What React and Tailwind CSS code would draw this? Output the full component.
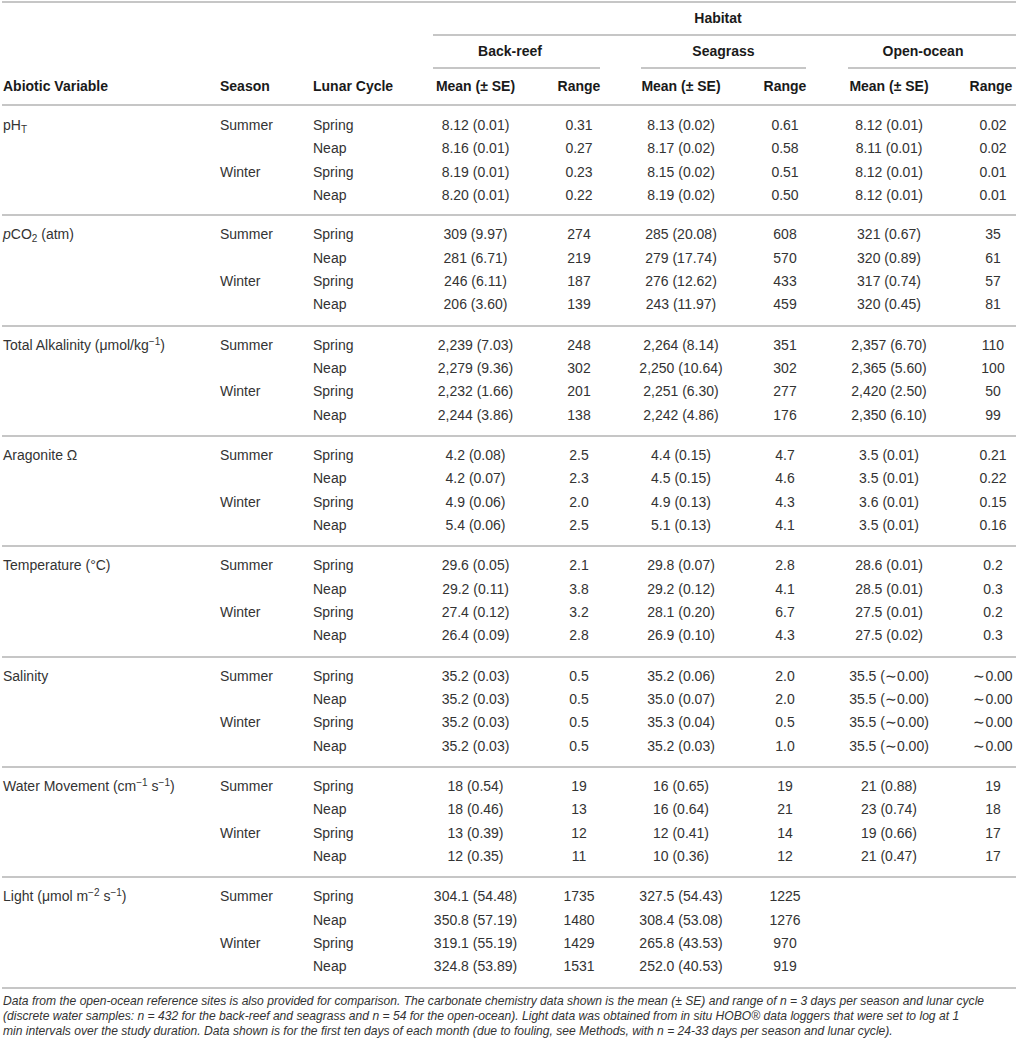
import React from 'react'

const COLS = 'grid grid-cols-[214px_93px_104px_125px_82px_122px_86px_122px_66px]'

const Sub = ({ children }) => <sub className="text-[10px] align-baseline bottom-[-3px]">{children}</sub>
const Sup = ({ children }) => <sup className="text-[10px] align-baseline top-[-5px]">{children}</sup>

const GROUPS = [
  {
    label: <>pH<Sub>T</Sub></>,
    rows: [
      ['Summer', 'Spring', '8.12 (0.01)', '0.31', '8.13 (0.02)', '0.61', '8.12 (0.01)', '0.02'],
      ['', 'Neap', '8.16 (0.01)', '0.27', '8.17 (0.02)', '0.58', '8.11 (0.01)', '0.02'],
      ['Winter', 'Spring', '8.19 (0.01)', '0.23', '8.15 (0.02)', '0.51', '8.12 (0.01)', '0.01'],
      ['', 'Neap', '8.20 (0.01)', '0.22', '8.19 (0.02)', '0.50', '8.12 (0.01)', '0.01'],
    ],
  },
  {
    label: <><i>p</i>CO<Sub>2</Sub> (atm)</>,
    rows: [
      ['Summer', 'Spring', '309 (9.97)', '274', '285 (20.08)', '608', '321 (0.67)', '35'],
      ['', 'Neap', '281 (6.71)', '219', '279 (17.74)', '570', '320 (0.89)', '61'],
      ['Winter', 'Spring', '246 (6.11)', '187', '276 (12.62)', '433', '317 (0.74)', '57'],
      ['', 'Neap', '206 (3.60)', '139', '243 (11.97)', '459', '320 (0.45)', '81'],
    ],
  },
  {
    label: <>Total Alkalinity (μmol/kg<Sup>−1</Sup>)</>,
    rows: [
      ['Summer', 'Spring', '2,239 (7.03)', '248', '2,264 (8.14)', '351', '2,357 (6.70)', '110'],
      ['', 'Neap', '2,279 (9.36)', '302', '2,250 (10.64)', '302', '2,365 (5.60)', '100'],
      ['Winter', 'Spring', '2,232 (1.66)', '201', '2,251 (6.30)', '277', '2,420 (2.50)', '50'],
      ['', 'Neap', '2,244 (3.86)', '138', '2,242 (4.86)', '176', '2,350 (6.10)', '99'],
    ],
  },
  {
    label: <>Aragonite Ω</>,
    rows: [
      ['Summer', 'Spring', '4.2 (0.08)', '2.5', '4.4 (0.15)', '4.7', '3.5 (0.01)', '0.21'],
      ['', 'Neap', '4.2 (0.07)', '2.3', '4.5 (0.15)', '4.6', '3.5 (0.01)', '0.22'],
      ['Winter', 'Spring', '4.9 (0.06)', '2.0', '4.9 (0.13)', '4.3', '3.6 (0.01)', '0.15'],
      ['', 'Neap', '5.4 (0.06)', '2.5', '5.1 (0.13)', '4.1', '3.5 (0.01)', '0.16'],
    ],
  },
  {
    label: <>Temperature (°C)</>,
    rows: [
      ['Summer', 'Spring', '29.6 (0.05)', '2.1', '29.8 (0.07)', '2.8', '28.6 (0.01)', '0.2'],
      ['', 'Neap', '29.2 (0.11)', '3.8', '29.2 (0.12)', '4.1', '28.5 (0.01)', '0.3'],
      ['Winter', 'Spring', '27.4 (0.12)', '3.2', '28.1 (0.20)', '6.7', '27.5 (0.01)', '0.2'],
      ['', 'Neap', '26.4 (0.09)', '2.8', '26.9 (0.10)', '4.3', '27.5 (0.02)', '0.3'],
    ],
  },
  {
    label: <>Salinity</>,
    rows: [
      ['Summer', 'Spring', '35.2 (0.03)', '0.5', '35.2 (0.06)', '2.0', '35.5 (∼0.00)', '∼0.00'],
      ['', 'Neap', '35.2 (0.03)', '0.5', '35.0 (0.07)', '2.0', '35.5 (∼0.00)', '∼0.00'],
      ['Winter', 'Spring', '35.2 (0.03)', '0.5', '35.3 (0.04)', '0.5', '35.5 (∼0.00)', '∼0.00'],
      ['', 'Neap', '35.2 (0.03)', '0.5', '35.2 (0.03)', '1.0', '35.5 (∼0.00)', '∼0.00'],
    ],
  },
  {
    label: <>Water Movement (cm<Sup>−1</Sup> s<Sup>−1</Sup>)</>,
    rows: [
      ['Summer', 'Spring', '18 (0.54)', '19', '16 (0.65)', '19', '21 (0.88)', '19'],
      ['', 'Neap', '18 (0.46)', '13', '16 (0.64)', '21', '23 (0.74)', '18'],
      ['Winter', 'Spring', '13 (0.39)', '12', '12 (0.41)', '14', '19 (0.66)', '17'],
      ['', 'Neap', '12 (0.35)', '11', '10 (0.36)', '12', '21 (0.47)', '17'],
    ],
  },
  {
    label: <>Light (μmol m<Sup>−2</Sup> s<Sup>−1</Sup>)</>,
    rows: [
      ['Summer', 'Spring', '304.1 (54.48)', '1735', '327.5 (54.43)', '1225', '', ''],
      ['', 'Neap', '350.8 (57.19)', '1480', '308.4 (53.08)', '1276', '', ''],
      ['Winter', 'Spring', '319.1 (55.19)', '1429', '265.8 (43.53)', '970', '', ''],
      ['', 'Neap', '324.8 (53.89)', '1531', '252.0 (40.53)', '919', '', ''],
    ],
  },
]

function Rule() {
  return <div className="h-[2px] bg-[#c6c6c6]" />
}

function Group({ group, first }) {
  return (
    <div className={first ? 'pt-[8px] pb-[7px]' : 'pt-[7px] pb-[8px]'}>
      {group.rows.map((r, i) => (
        <div key={i} className={`${COLS} h-[23.33px] items-center whitespace-nowrap`}>
          <div className="pl-[1px]">{i === 0 ? group.label : ''}</div>
          <div className="pl-[4px]">{r[0]}</div>
          <div className="pl-[4px]">{r[1]}</div>
          <div className="text-center">{r[2]}</div>
          <div className="text-center">{r[3]}</div>
          <div className="text-center">{r[4]}</div>
          <div className="text-center">{r[5]}</div>
          <div className="text-center">{r[6]}</div>
          <div className="text-center pl-[20px]">{r[7]}</div>
        </div>
      ))}
    </div>
  )
}

export default function App() {
  return (
    <div className="bg-white w-[1016px] min-h-[1043px] pl-[2px] pt-[1px] font-['Liberation_Sans',Arial,sans-serif] text-[14px] text-[#333]">
      <Rule />
      {/* header */}
      <div className="font-bold text-[#1a1a1a]">
        <div className={`${COLS} h-[31px]`}>
          <div className="col-start-4 col-span-6 ml-[20px] pr-[13px] flex items-center justify-center">Habitat</div>
        </div>
        <div className={COLS}>
          <div className="col-start-4 col-span-6 ml-[20px] h-[2px] bg-[#c6c6c6]" />
        </div>
        <div className={`${COLS} h-[31px]`}>
          <div className="col-start-4 col-span-2 mx-[20px] pr-[13px] flex items-center justify-center">Back-reef</div>
          <div className="col-span-2 ml-[21px] mr-[22px] flex items-center justify-center">Seagrass</div>
          <div className="col-span-2 ml-[20px] pr-[18px] flex items-center justify-center">Open-ocean</div>
        </div>
        <div className={COLS}>
          <div className="col-start-4 col-span-2 mx-[20px] h-[2px] bg-[#c6c6c6]" />
          <div className="col-span-2 ml-[21px] mr-[22px] h-[2px] bg-[#c6c6c6]" />
          <div className="col-span-2 ml-[20px] h-[2px] bg-[#c6c6c6]" />
        </div>
        <div className={`${COLS} h-[35px] items-center whitespace-nowrap`}>
          <div className="pl-[1px]">Abiotic Variable</div>
          <div className="pl-[4px]">Season</div>
          <div className="pl-[4px]">Lunar Cycle</div>
          <div className="text-center">Mean (± SE)</div>
          <div className="text-center">Range</div>
          <div className="text-center">Mean (± SE)</div>
          <div className="text-center">Range</div>
          <div className="text-center">Mean (± SE)</div>
          <div className="text-center pl-[16px]">Range</div>
        </div>
      </div>
      <Rule />

      {GROUPS.map((g, i) => (
        <div key={i}>
          <Group group={g} first={i === 0} />
          <Rule />
        </div>
      ))}

      {/* footnote */}
      <p className="pt-[5px] pl-[1px] italic text-[12.1px] leading-[15px] whitespace-nowrap text-[#333]">
        Data from the open-ocean reference sites is also provided for comparison. The carbonate chemistry data shown is the mean (± SE) and range of n = 3 days per season and lunar cycle
        <br />
        (discrete water samples: n = 432 for the back-reef and seagrass and n = 54 for the open-ocean). Light data was obtained from in situ HOBO® data loggers that were set to log at 1
        <br />
        min intervals over the study duration. Data shown is for the first ten days of each month (due to fouling, see Methods, with n = 24-33 days per season and lunar cycle).
      </p>
    </div>
  )
}
